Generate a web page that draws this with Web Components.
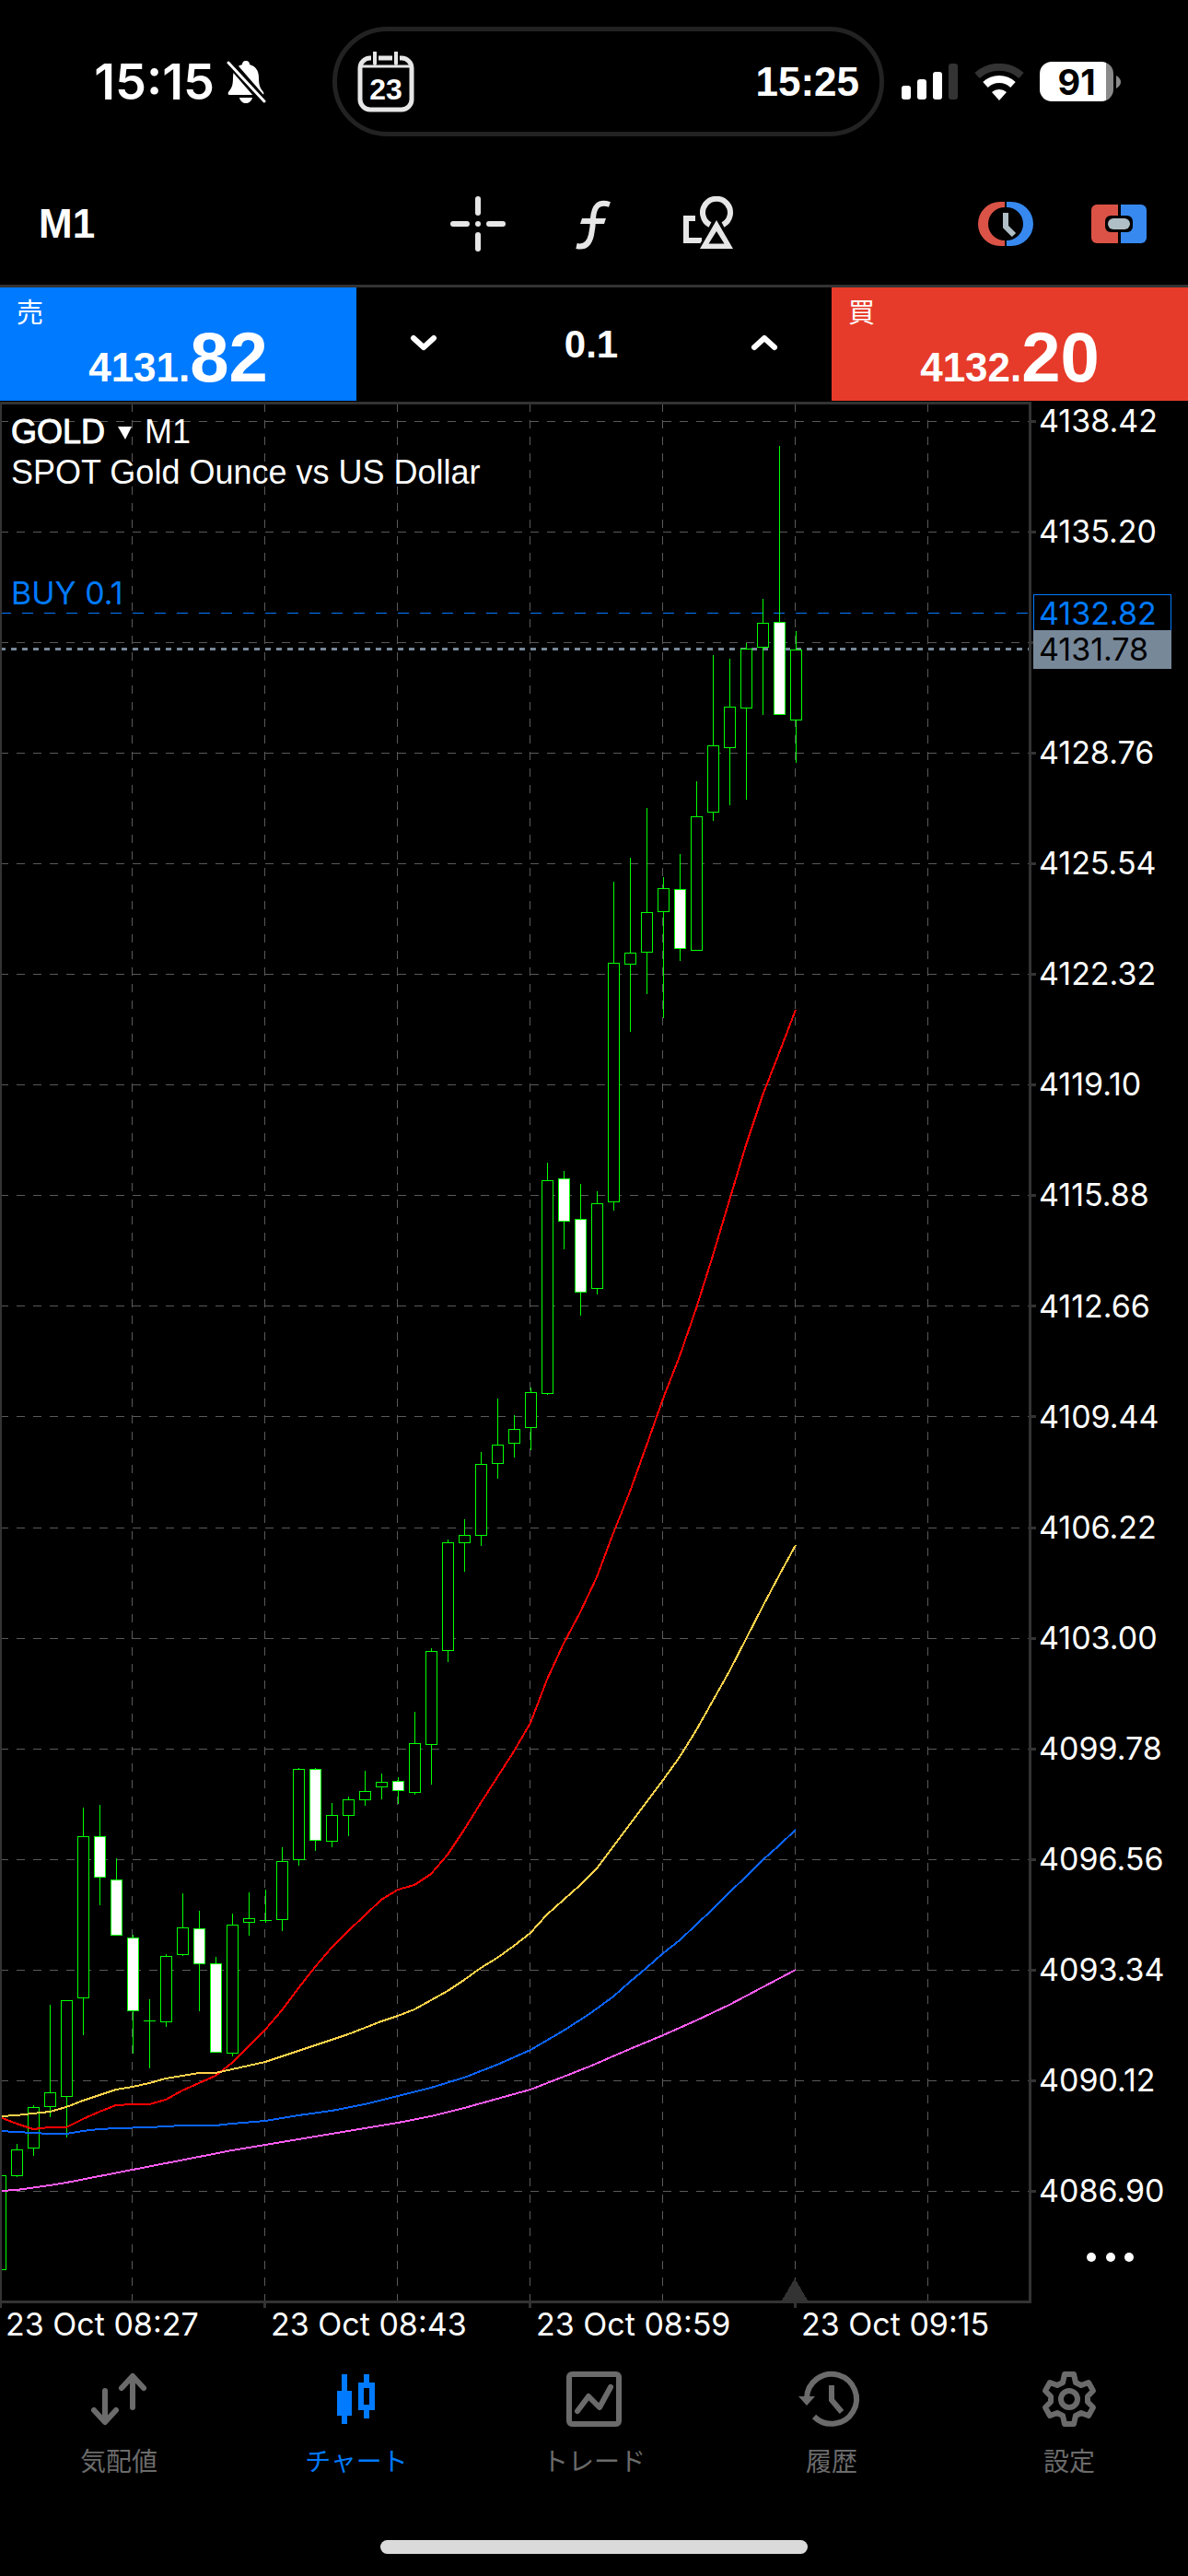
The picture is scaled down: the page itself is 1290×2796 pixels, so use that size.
<!DOCTYPE html>
<html lang="ja">
<head>
<meta charset="utf-8">
<meta name="viewport" content="width=device-width, initial-scale=1">
<title>GOLD M1</title>
<style>
  html { background: #000; }
  body { margin: 0; background: #000; color: #fff; font-family: Inter, "Noto Sans CJK JP", sans-serif; }
</style>
</head>
<body>
<trading-app></trading-app>

<script>
const BASE = `
  * { box-sizing: border-box; }
  button, input { margin: 0; padding: 0; border: 0; background: none; color: inherit; font: inherit; }
  svg { display: block; }
`;

function define(name, html, after) {
  const template = document.createElement('template');
  template.innerHTML = `<style>${BASE}</style>` + html;
  customElements.define(name, class extends HTMLElement {
    constructor() {
      super();
      this.attachShadow({ mode: 'open' }).append(template.content.cloneNode(true));
      if (after) after.call(this, this.shadowRoot);
    }
  });
}

/* Phone status bar with the live activity pill */
define('status-bar', `
  <style>
    :host { display: grid; grid-template-columns: 361fr 599fr 330fr; height: 177px; padding: 29px 0; }
    .time, .pill, .signals { display: flex; align-items: center; height: 119px; }
    .time { justify-content: flex-end; gap: 12px; padding-right: 72px; font-size: 54px; font-weight: 600; }
    .pill { justify-content: space-between; padding: 0 22px; border: 5px solid #222; border-radius: 60px; }
    .clock { font: 700 44px "Liberation Sans", sans-serif; }
    .calendar { display: grid; }
    .calendar > * { grid-area: 1 / 1; }
    .calendar span { align-self: end; justify-self: center; padding-bottom: 4px; font: 700 32px/42px "Liberation Sans", sans-serif; }
    .signals { gap: 17px; padding-left: 19px; }
    .battery { display: flex; align-items: center; gap: 3px; }
    .cell { width: 80px; height: 43px; border-radius: 13px; background: linear-gradient(90deg, #fff 90%, #8a8a8a 90%); color: #000; font: 700 38px/44px Inter, sans-serif; text-align: center; }
  </style>
  <div class="time"><span>15:15</span>
    <svg width="44" height="48" viewBox="0 0 44 48" aria-label="silent">
      <path d="M22 1c3 0 4 2 4 4 7 2 10 7 10 14 0 10 2 12 5 16 1 2 0 3-2 3H5c-2 0-3-1-2-3 3-4 5-6 5-16 0-7 3-12 10-14 0-2 1-4 4-4z" fill="#fff"/>
      <path d="M15 41h14c-1 4-4 6-7 6s-6-2-7-6z" fill="#fff"/>
      <path d="M3 1l40 46" stroke="#000" stroke-width="9"/>
      <path d="M3 3l39 42" stroke="#fff" stroke-width="3" stroke-linecap="round"/>
    </svg>
  </div>
  <div class="pill">
    <div class="calendar">
      <svg width="62" height="66" viewBox="0 0 62 66">
        <rect x="3" y="7" width="56" height="56" rx="11" fill="none" stroke="#e6e6e6" stroke-width="5"/>
        <path d="M3 16h56" stroke="#e6e6e6" stroke-width="3"/>
        <path d="M19 0v13M42 0v13" stroke="#000" stroke-width="8"/>
        <path d="M19 1v12M42 1v12" stroke="#e6e6e6" stroke-width="4" stroke-linecap="round"/>
      </svg>
      <span>23</span>
    </div>
    <span class="clock">15:25</span>
  </div>
  <div class="signals">
    <svg width="62" height="40" viewBox="0 0 62 40" aria-label="signal">
      <g fill="#fff"><rect y="24" width="10" height="15" rx="3"/><rect x="17" y="17" width="10" height="22" rx="3"/><rect x="34" y="9" width="10" height="30" rx="3"/></g>
      <rect x="51" width="10" height="39" rx="3" fill="#333"/>
    </svg>
    <svg width="54" height="40" viewBox="0 0 54 40" aria-label="wifi">
      <path d="M3 13a36 36 0 0 1 48 0" fill="none" stroke="#333" stroke-width="8"/>
      <path d="M12 23a22 22 0 0 1 30 0" fill="none" stroke="#fff" stroke-width="8"/>
      <path d="M27 40l-8-9a12 12 0 0 1 16 0z" fill="#fff"/>
    </svg>
    <div class="battery"><div class="cell">91</div>
      <svg width="5" height="14" viewBox="0 0 5 14"><path d="M0 0q5 3 5 7t-5 7z" fill="#8a8a8a"/></svg>
    </div>
  </div>
`);

/* Toolbar above the quotes */
define('chart-toolbar', `
  <style>
    :host { display: grid; grid-template-columns: 1fr auto 1fr; align-items: center; height: 135px; padding: 0 45px 0 42px; border-bottom: 3px solid #333; }
    .frame { justify-self: start; font: 700 44px "Liberation Sans", sans-serif; }
    .tools { display: flex; gap: 65px; }
    .modes { display: flex; gap: 63px; justify-self: end; }
  </style>
  <button class="frame">M1</button>
  <div class="tools">
    <button aria-label="crosshair"><svg width="60" height="60" viewBox="0 0 60 60" stroke="#e6e6e6" stroke-width="6" stroke-linecap="round"><path d="M30 3v15M30 42v15M3 30h15M42 30h15M30 30h0"/></svg></button>
    <button aria-label="indicators"><svg width="60" height="60" viewBox="0 0 60 60" fill="none" stroke="#e6e6e6" stroke-width="6"><path d="M12 54c9 2 14-3 16-12 2-9 2-12 2-18 1-13 6-19 18-15"/><path d="M18 24h26l-2 6H16z" fill="#e6e6e6" stroke="none"/></svg></button>
    <button aria-label="objects"><svg width="60" height="60" viewBox="0 0 60 60" fill="none" stroke="#e6e6e6" stroke-width="6"><path d="M32 31A15 15 0 1 1 46 31"/><path d="M16 24H6v24h17"/><path d="M39 25L58 58H19z" fill="#000" stroke="#000" stroke-width="3"/><path d="M39 26L57 57H21zM39 38L30.500 51.500h17z" fill="#e6e6e6" fill-rule="evenodd" stroke="none"/></svg></button>
  </div>
  <div class="modes">
    <button aria-label="pending orders"><svg width="60" height="60" viewBox="0 0 60 60"><path d="M29 6h-5a24 24 0 0 0 0 48h5v-6a18 18 0 0 1 0-36z" fill="#da5346"/><path d="M31 6h5a24 24 0 0 1 0 48h-5v-6a18 18 0 0 0 0-36z" fill="#3789f0"/><path d="M30 18v15l9 9" fill="none" stroke="#b0bec5" stroke-width="6"/></svg></button>
    <button aria-label="one click trading"><svg width="60" height="60" viewBox="0 0 60 60"><path d="M29 9H6a6 6 0 0 0-6 6v30a6 6 0 0 0 6 6h23z" fill="#da5346"/><path d="M32 9h22a6 6 0 0 1 6 6v30a6 6 0 0 1-6 6H32z" fill="#3789f0"/><rect x="15" y="21" width="30" height="18" rx="6" fill="#000"/><rect x="18" y="24" width="24" height="12" rx="6" fill="#b0bec5"/></svg></button>
  </div>
`);

/* One quote: label and price come in through slots */
define('quote-button', `
  <style>
    :host { display: block; }
    button { display: block; position: relative; width: 100%; height: 123px; text-align: center; background: var(--quote); font: 700 44px "Liberation Sans", sans-serif; }
    .side { position: absolute; left: 18px; top: 6px; font: 400 29px/38px "Noto Sans CJK JP", sans-serif; }
    .price { display: block; padding-top: 29px; line-height: 94px; }
    ::slotted([slot=pips]) { font-size: 76px; }
  </style>
  <button><span class="side"><slot name="side"></slot></span><span class="price"><slot></slot><slot name="pips"></slot></span></button>
`);

define('trade-panel', `
  <style>
    :host { display: grid; grid-template-columns: 3fr 4fr 3fr; height: 124px; }
    .volume { display: flex; justify-content: space-between; align-items: center; height: 123px; padding: 0 58px; }
    input { width: 120px; padding-right: 6px; text-align: center; font: 700 42px "Liberation Sans", sans-serif; }
  </style>
  <quote-button style="--quote:#007aff"><span slot="side">売</span>4131.<span slot="pips">82</span></quote-button>
  <div class="volume">
    <button aria-label="decrease"><svg width="30" height="30" viewBox="0 0 30 30" fill="none" stroke="#fff" stroke-width="6" stroke-linecap="round" stroke-linejoin="round"><path d="M4 8l11 10L26 8"/></svg></button>
    <input aria-label="volume" value="0.1">
    <button aria-label="increase"><svg width="30" height="30" viewBox="0 0 30 30" fill="none" stroke="#fff" stroke-width="6" stroke-linecap="round" stroke-linejoin="round"><path d="M4 18L15 8l11 10"/></svg></button>
  </div>
  <quote-button style="--quote:#e63b2a"><span slot="side">買</span>4132.<span slot="pips">20</span></quote-button>
`);

/* Candles, one per 18 units: high, body top, body bottom, low, and 1 for a falling bar */
const BARS = [
  [2361,2361,2463,2463],[2327,2333,2361,2363],[2285,2287,2331,2340],[2176,2271,2286,2298],[2171,2171,2275,2320],
  [1962,1993,2168,2209],[1959,1993,2037,2068,1],[2017,2040,2100,2100,1],[2100,2103,2182,2229,1],[2170,2193,2193,2245],
  [2121,2123,2194,2200],[2055,2092,2121,2123],[2074,2093,2131,2183,1],[2124,2131,2227,2227,1],[2077,2089,2228,2232],
  [2054,2082,2086,2101],[2051,2084,2084,2087],[2005,2020,2083,2096],[1919,1920,2018,2025],[1919,1920,1997,2009,1],
  [1957,1970,1998,2005],[1950,1953,1970,1993],[1922,1944,1953,1960],[1925,1934,1939,1953],[1929,1933,1943,1958,1],
  [1858,1892,1945,1948],[1789,1792,1893,1937],[1671,1674,1791,1804],[1649,1666,1674,1706],[1576,1589,1666,1678],
  [1518,1568,1588,1605],[1536,1551,1566,1582],[1506,1511,1549,1574],[1262,1281,1512,1514],[1271,1279,1325,1356,1],
  [1285,1323,1402,1428,1],[1293,1306,1398,1405],[957,1045,1304,1314],[931,1034,1046,1120],[877,990,1033,1079],
  [952,964,989,1105],[927,965,1029,1043,1],[848,886,1031,1031],[711,809,881,891],[715,767,811,874],
  [698,704,768,868],[650,676,702,776],[484,675,775,775,1],[685,705,781,828]
];
const AVERAGES = {
  '#ff0000': '0,2298 18,2305 36,2311 54,2309 72,2309 90,2300 108,2292 126,2285 144,2284 162,2284 180,2279 198,2269 216,2261 234,2253 252,2239 270,2221 288,2203 306,2182 324,2158 342,2135 360,2114 378,2096 396,2079 414,2062 432,2051 450,2046 468,2034 486,2013 504,1986 522,1957 540,1929 558,1901 576,1870 594,1823 612,1784 630,1750 648,1712 666,1664 684,1619 702,1569 720,1518 738,1472 756,1420 774,1363 792,1303 810,1243 828,1189 846,1143 864,1096',
  '#ffd24a': '0,2297 18,2296 36,2294 54,2292 72,2287 90,2280 108,2274 126,2268 144,2265 162,2261 180,2256 198,2253 216,2250 234,2250 252,2246 270,2242 288,2238 306,2232 324,2226 342,2220 360,2214 378,2208 396,2201 414,2194 432,2188 450,2181 468,2171 486,2161 504,2149 522,2136 540,2125 558,2112 576,2098 594,2078 612,2062 630,2046 648,2028 666,2004 684,1980 702,1956 720,1932 738,1907 756,1878 774,1846 792,1814 810,1779 828,1744 846,1710 864,1677',
  '#0a64ff': '0,2313 18,2314 36,2315 54,2316 72,2316 90,2313 108,2311 126,2310 162,2309 198,2307 234,2307 252,2305 288,2302 306,2299 324,2296 360,2291 396,2284 432,2275 468,2266 504,2255 540,2241 576,2225 612,2204 640,2186 666,2167 684,2151 702,2136 720,2120 738,2106 756,2089 774,2072 792,2054 810,2037 828,2019 846,2003 864,1986',
  '#ff5cf4': '0,2378 18,2377 54,2372 72,2369 108,2362 144,2355 180,2348 216,2341 252,2334 288,2328 324,2322 360,2316 396,2310 432,2304 468,2297 504,2288 540,2278 576,2268 612,2254 640,2243 684,2224 720,2209 756,2193 792,2176 828,2157 864,2138'
};
const PRICES = ['4138.42','4135.20','','4128.76','4125.54','4122.32','4119.10','4115.88','4112.66','4109.44','4106.22','4103.00','4099.78','4096.56','4093.34','4090.12','4086.90'];

define('price-chart', `
  <style>
    :host { display: grid; grid-template-columns: 1120fr 170fr; font-size: 34px; }
    .plot { position: relative; min-width: 0; }
    .plot > svg { width: 100%; height: auto; }
    .title { position: absolute; left: 12px; top: 11px; font: 36px/44px "Liberation Sans", sans-serif; }
    .title p { margin: 0; }
    .symbol { display: flex; align-items: center; gap: 14px; }
    .symbol button { display: flex; align-items: center; gap: 14px; -webkit-text-stroke: 1px #fff; }
    .order { position: absolute; left: 12px; top: 188px; line-height: 40px; color: #007aff; }
    .axis { position: relative; display: flex; flex-direction: column; }
    ul { flex: 1; display: flex; flex-direction: column; justify-content: space-between; margin: 0; padding: 0 0 0 8px; list-style: none; }
    li, .tag { height: 42px; line-height: 42px; }
    .tag { position: absolute; left: 2px; min-width: 150px; padding-left: 6px; }
    .entry { top: 209px; border: 1px solid #007aff; line-height: 40px; padding-left: 5px; color: #007aff; background: #000; }
    .last { top: 248px; background: #789; color: #000; }
    .more { height: 101px; padding-left: 60px; }
    .dates { grid-column: 1 / -1; display: grid; grid-template-columns: repeat(4, 288fr) 138fr; height: 60px; padding-top: 2px; line-height: 42px; white-space: nowrap; }
    .dates span { padding-left: 6px; }
  </style>
  <div class="plot">
    <svg viewBox="0 436 1120 2064" shape-rendering="crispEdges" role="img" aria-label="GOLD M1"></svg>
    <div class="title">
      <p class="symbol"><button>GOLD <svg width="15" height="15" viewBox="0 0 15 15"><path d="M0 1h15L8 15z" fill="#fff"/></svg></button>M1</p>
      <p>SPOT Gold Ounce vs US Dollar</p>
    </div>
    <div class="order">BUY 0.1</div>
  </div>
  <div class="axis">
    <ul>${PRICES.map(p => `<li>${p}</li>`).join('')}</ul>
    <button class="more" aria-label="more"><svg width="54" height="12" viewBox="0 0 54 12" fill="#fff"><circle cx="5" cy="6" r="5"/><circle cx="26" cy="6" r="5"/><circle cx="46" cy="6" r="5"/></svg></button>
    <div class="tag entry">4132.82</div>
    <div class="tag last">4131.78</div>
  </div>
  <div class="dates"><span>23 Oct 08:27</span><span>23 Oct 08:43</span><span>23 Oct 08:59</span><span>23 Oct 09:15</span></div>
`, function (root) {
  let grid = '', rows = '', ticks = '', marks = '', bars = '', lines = '';
  for (let x = 143; x < 1117; x += 144) grid += `M${x}.5 438V2497`;
  for (let x = 287; x < 1000; x += 288) marks += `M${x}.5 2497v3`;
  for (let i = 0; i < 17; i++) {
    const y = 457 + Math.floor(i * 120.1);
    rows += `M0 ${y}.5H1117`;
    ticks += `M1117 ${y}.5h8`;
  }
  BARS.forEach(([high, top, bottom, low, falling], i) => {
    const x = i * 18;
    bars += `<path d="M${x}.5 ${high}V${low}"/><rect x="${x - 6}" y="${top}" width="13" height="${bottom - top + 1}" fill="#0f0" stroke="none"/>`;
    if (bottom - top > 1) bars += `<rect x="${x - 5}" y="${top + 1}" width="11" height="${bottom - top - 1}" fill="${falling ? '#fff' : '#000'}" stroke="none"/>`;
  });
  for (const [colour, points] of Object.entries(AVERAGES))
    lines += `<polyline points="${points}" fill="none" stroke="${colour}" stroke-width="2"/>`;
  const chart = root.querySelector('.plot > svg');
  chart.style.overflow = 'visible';
  chart.innerHTML = `
    <g fill="none" stroke="#5a5a5a" stroke-dasharray="9 9"><path d="${grid}"/><path d="${rows}"/></g>
    <path d="M0 665.5H1117" stroke="#007aff" stroke-dasharray="12 12"/>
    <path d="M0 704.5H1117" stroke="#789" stroke-width="3" stroke-dasharray="6 6"/>
    <path d="M863 2473l14 24h-28z" fill="#333"/>
    <g stroke="#0f0">${bars}</g>${lines}
    <path d="M0 437.5H1118.5V2498.5H0M.5 437V2498" fill="none" stroke="#333" stroke-width="3"/>
    <path d="${ticks}" stroke="#333" stroke-width="3"/>
    <path d="M.5 2500v5M287.500 2500v5M575.500 2500v5M863.500 2500v5" stroke="#333" stroke-width="3"/>`;
});

define('tab-item', `
  <style>
    :host { display: block; color: #6b6b6b; }
    :host([active]) { color: #007aff; }
    a { display: flex; flex-direction: column; align-items: center; gap: 13px; color: inherit; text-decoration: none; font: 28px/42px "Noto Sans CJK JP", sans-serif; }
    ::slotted(svg) { display: block; width: 64px; height: 64px; }
  </style>
  <a href="#"><slot name="icon"></slot><slot></slot></a>
`);

define('tab-bar', `
  <style>
    :host { display: block; }
    nav { display: grid; grid-template-columns: repeat(5, 1fr); padding-top: 12px; }
    .home { width: 36%; height: 15px; margin: 66px auto 0; border-radius: 8px; background: #dadada; }
  </style>
  <nav>
    <tab-item><svg slot="icon" viewBox="-32 -32 64 64" fill="none" stroke="currentColor" stroke-width="6" stroke-linecap="round" stroke-linejoin="round"><path d="M-15-9v33M-27 12l12 13L-3 12M15 9v-33M3-12l12-13 12 13"/></svg>気配値</tab-item>
    <tab-item active><svg slot="icon" viewBox="-32 -32 64 64" fill="currentColor"><path d="M-16-27h6v18h5v27h-5v9h-6v-9h-5V-9h5zM8-27h6v9h6v30h-6v9H8v-9H2v-30h6zM8-12V6h6v-18z" fill-rule="evenodd"/></svg>チャート</tab-item>
    <tab-item><svg slot="icon" viewBox="-32 -32 64 64" fill="none" stroke="currentColor" stroke-width="6"><rect x="-27" y="-27" width="54" height="54" rx="3"/><path d="M-18 13L-6-3 6 9 18-13" stroke-linecap="round" stroke-linejoin="round"/></svg>トレード</tab-item>
    <tab-item><svg slot="icon" viewBox="-32 -32 64 64" fill="none" stroke="currentColor" stroke-width="6" style="overflow:visible"><path d="M-27-1A27 27 0 1 1-19 19"/><path d="M-36-3h18l-9 10z" fill="currentColor" stroke="none"/><path d="M0-15V1L11 14"/></svg>履歴</tab-item>
    <tab-item><svg slot="icon" viewBox="-32 -32 64 64" fill="none" stroke="currentColor" stroke-width="6" stroke-linejoin="round"><path d="M-5-27H5L7-18 13-15 21-18 26-9 20-3V3L26 9 21 18 13 15 7 18 5 27H-5L-7 18-13 15-21 18-26 9-20 3V-3L-26-9-21-18-13-15-7-18z"/><circle r="9"/></svg>設定</tab-item>
  </nav>
  <div class="home"></div>
`);

define('trading-app', `
  <style>:host { display: flex; flex-direction: column; min-height: 100vh; background: #000; }</style>
  <status-bar></status-bar>
  <chart-toolbar></chart-toolbar>
  <trade-panel></trade-panel>
  <price-chart></price-chart>
  <tab-bar></tab-bar>
`);
</script>
</body>
</html>
